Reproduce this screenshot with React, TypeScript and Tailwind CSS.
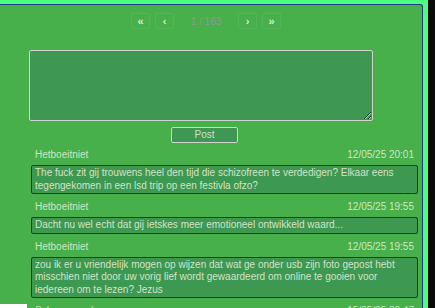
const messages = [
  {
    user: "Hetboeitniet",
    date: "12/05/25 20:01",
    text: "The fuck zit gij trouwens heel den tijd die schizofreen te verdedigen? Elkaar eens tegengekomen in een lsd trip op een festivla ofzo?",
  },
  {
    user: "Hetboeitniet",
    date: "12/05/25 19:55",
    text: "Dacht nu wel echt dat gij ietskes meer emotioneel ontwikkeld waard...",
  },
  {
    user: "Hetboeitniet",
    date: "12/05/25 19:55",
    text: "zou ik er u vriendelijk mogen op wijzen dat wat ge onder usb zijn foto gepost hebt misschien niet door uw vorig lief wordt gewaardeerd om online te gooien voor iedereen om te lezen? Jezus",
  },
  {
    user: "Schemerzaal",
    date: "15/05/25 20:47",
    text: "...",
  },
];

function PageButton({ label }: { label: string }) {
  return (
    <button className="w-[19px] h-[16px] flex items-center justify-center rounded-[2px] border border-[#52b658] text-[#d6ecd2] text-[11px] font-bold leading-none">
      {label}
    </button>
  );
}

export default function App() {
  return (
    <div
      className="relative w-[435px] h-[308px] overflow-hidden flex bg-[#4cff7f]"
      style={{ fontFamily: '"Liberation Sans", Arial, sans-serif' }}
    >
      <div className="w-[428px] pt-[4px]">
        <div className="w-[423px] h-[400px] bg-[#47b04b] border-t border-r border-[#1f3a86] rounded-tr-[3px]">
          {/* paginering */}
          <div className="flex items-center ml-[131px] mt-[8px] h-[16px]">
            <PageButton label="«" />
            <div className="w-[5px]" />
            <PageButton label="‹" />
            <span className="w-[64px] text-center text-[10px] text-[#8f979a]">1 / 163</span>
            <PageButton label="›" />
            <div className="w-[5px]" />
            <PageButton label="»" />
          </div>

          {/* nieuw bericht */}
          <textarea className="block ml-[29px] mt-[21px] w-[344px] h-[71px] bg-[#3e9853] border border-[#cfd3cc] rounded-[2px] outline-none" />
          <button className="block ml-[171px] mt-[6px] w-[67px] h-[16px] bg-[#3e9853] border border-[#cfd3cc] rounded-[2px] text-[10px] leading-none text-[#d3dcc8]">
            Post
          </button>

          {/* berichten */}
          <div className="ml-[31px] w-[387px] mt-[5px]">
            {messages.map((m, i) => (
              <div key={i} className="mb-[6px]">
                <div className="flex justify-between px-[4px] h-[13px] text-[10px] leading-[13px] text-[#cde6c3]">
                  <span>{m.user}</span>
                  <span>{m.date}</span>
                </div>
                <div className="mt-[4px] bg-[#3d9852] border border-[#20305c] rounded-[2px] px-[3px] py-[1px] text-[10px] leading-[12.5px] text-[#d5e2c4]">
                  {m.text}
                </div>
              </div>
            ))}
          </div>
        </div>
      </div>
      <div className="w-[7px] bg-[#0a0a0a]" />
      <div className="absolute left-0 bottom-0 w-[27px] h-[4px] bg-white" />
    </div>
  );
}
